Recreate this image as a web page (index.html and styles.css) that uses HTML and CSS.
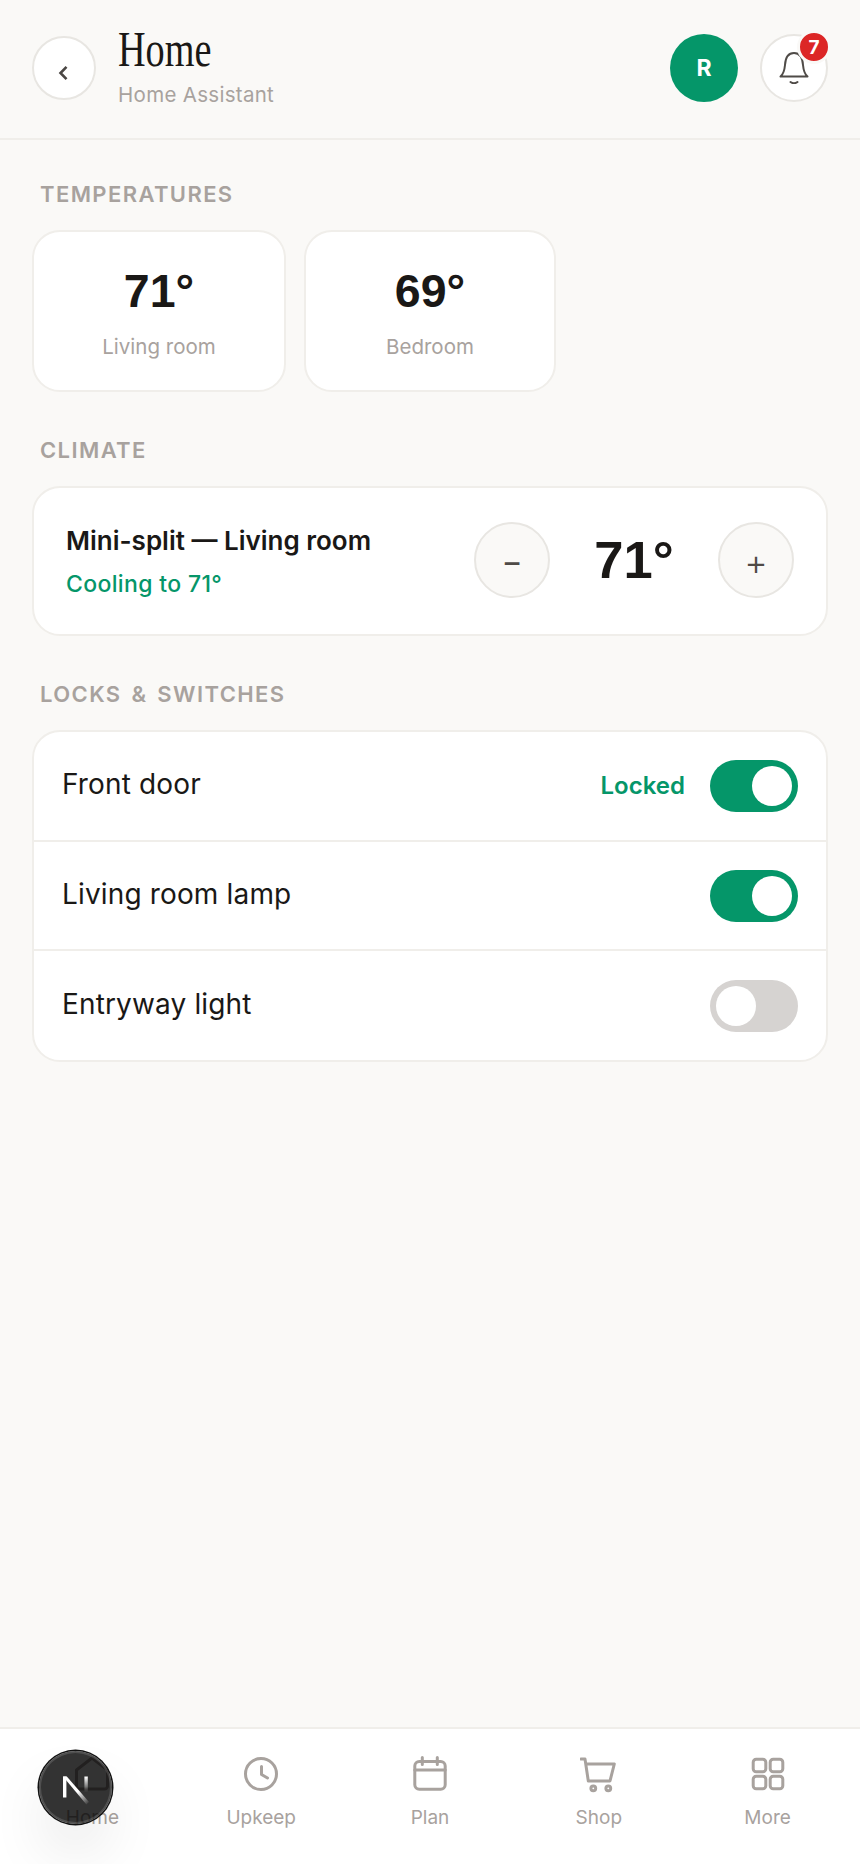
FILE: index.html
```html
<!DOCTYPE html>
<html lang="en">
<head>
<meta charset="utf-8">
<title>Home</title>
<link rel="stylesheet" href="styles.css">
</head>
<body>
<div class="app">
  <header class="top">
    <button class="round back" aria-label="Back">
      <svg width="16" height="16" viewBox="0 0 16 16" fill="none" stroke="#4a4643" stroke-width="2.6"><path d="M10.5 1.800 4.500 8l6 6.200"/></svg>
    </button>
    <div class="titles">
      <h1 class="title"><span>Home</span></h1>
      <div class="sub">Home Assistant</div>
    </div>
    <div class="avatar">R</div>
    <button class="round bell" aria-label="Notifications">
      <svg width="32" height="32" viewBox="0 0 32 32" fill="none" stroke="#4f4b47" stroke-width="2" stroke-linecap="round" stroke-linejoin="round"><path d="M2.500 24.500h27c-3-2.500-4-6-4.500-11.500C24.500 5 21 1 16 1S7.500 5 7 13c-.5 5.500-1.500 9-4.500 11.500Z"/><path d="M12.500 30c2 1.400 5 1.400 7 0"/></svg>
      <span class="badge">7</span>
    </button>
  </header>

  <main class="content">
    <h2 class="label">TEMPERATURES</h2>
    <div class="temps">
      <div class="card temp"><div class="temp-val">71°</div><div class="temp-name">Living room</div></div>
      <div class="card temp"><div class="temp-val">69°</div><div class="temp-name">Bedroom</div></div>
    </div>

    <h2 class="label">CLIMATE</h2>
    <div class="card climate">
      <div class="climate-info">
        <div class="climate-name">Mini-split — Living room</div>
        <div class="climate-state">Cooling to 71°</div>
      </div>
      <button class="step">−</button>
      <div class="setpoint">71°</div>
      <button class="step plus">+</button>
    </div>

    <h2 class="label">LOCKS &amp; SWITCHES</h2>
    <div class="card list">
      <div class="row"><span class="row-name">Front door</span><span class="row-state">Locked</span><span class="toggle on"><i></i></span></div>
      <div class="row"><span class="row-name">Living room lamp</span><span class="toggle on"><i></i></span></div>
      <div class="row"><span class="row-name">Entryway light</span><span class="toggle"><i></i></span></div>
    </div>
  </main>

  <nav class="tabs">
    <div class="tab">
      <svg width="38" height="38" viewBox="0 0 38 38" fill="none" stroke="currentColor" stroke-width="3" stroke-linecap="round" stroke-linejoin="round"><path d="M3.500 15 19 3l15.500 12v16a3 3 0 0 1-3 3h-25a3 3 0 0 1-3-3Z"/></svg>
      <span>Home</span>
    </div>
    <div class="tab">
      <svg width="38" height="38" viewBox="0 0 38 38" fill="none" stroke="currentColor" stroke-width="3" stroke-linecap="round" stroke-linejoin="round"><circle cx="19" cy="19" r="15.500"/><path d="M19.500 11.500V19.500l6 3.500"/></svg>
      <span>Upkeep</span>
    </div>
    <div class="tab">
      <svg width="38" height="38" viewBox="0 0 38 38" fill="none" stroke="currentColor" stroke-width="3" stroke-linecap="round" stroke-linejoin="round"><rect x="3.800" y="6.500" width="30.400" height="27.700" rx="4.500"/><path d="M3.800 15h30.400M11.300 2.500v7M26.300 2.500v7"/></svg>
      <span>Plan</span>
    </div>
    <div class="tab">
      <svg width="38" height="38" viewBox="0 0 38 38" fill="none" stroke="currentColor" stroke-width="3" stroke-linecap="round" stroke-linejoin="round"><path d="M1 4h4l3.300 22h21.700L34.300 9H6"/><circle cx="13.300" cy="33.300" r="2.400"/><circle cx="28.300" cy="33.300" r="2.400"/></svg>
      <span>Shop</span>
    </div>
    <div class="tab">
      <svg width="38" height="38" viewBox="0 0 38 38" fill="none" stroke="currentColor" stroke-width="3" stroke-linejoin="round"><rect x="4.200" y="4.200" width="12.600" height="12.600" rx="3"/><rect x="21.200" y="4.200" width="12.600" height="12.600" rx="3"/><rect x="4.200" y="21.200" width="12.600" height="12.600" rx="3"/><rect x="21.200" y="21.200" width="12.600" height="12.600" rx="3"/></svg>
      <span>More</span>
    </div>
  </nav>

  <div class="devbadge">
    <svg width="34" height="34" viewBox="0 0 34 34" fill="none">
      <defs>
        <linearGradient id="nd" x1="6" y1="5" x2="30" y2="33" gradientUnits="userSpaceOnUse"><stop offset="0.550" stop-color="#fff"/><stop offset="1" stop-color="#fff" stop-opacity="0"/></linearGradient>
        <linearGradient id="ns" x1="27" y1="6" x2="27" y2="21" gradientUnits="userSpaceOnUse"><stop stop-color="#fff"/><stop offset="1" stop-color="#fff" stop-opacity="0"/></linearGradient>
      </defs>
      <path d="M4 5.500h3.400v21H4z" fill="#fff"/>
      <path d="M4 5.500h3.800L30 31l-2.600 2.500L4 5.500Z" fill="url(#nd)"/>
      <path d="M25.400 5.500h3.400V21h-3.400z" fill="url(#ns)"/>
    </svg>
  </div>
</div>
</body>
</html>
```
FILE: styles.css
```css
* { box-sizing: border-box; }
html, body { margin: 0; padding: 0; }
body {
  background: #faf9f7;
  color: #1a1816;
  font-family: "Inter", "Liberation Sans", sans-serif;
}
button { font: inherit; padding: 0; cursor: pointer; }
h1, h2 { margin: 0; font-weight: inherit; }

.app {
  position: relative;
  width: 860px;
  height: 1864px;
  display: flex;
  flex-direction: column;
  overflow: hidden;
}

.top {
  display: flex;
  align-items: center;
  height: 140px;
  padding: 0 32px 2px;
  border-bottom: 2px solid #f0eeea;
}
.round {
  display: flex;
  align-items: center;
  justify-content: center;
  background: #fff;
  border: 2px solid #e8e6e2;
  border-radius: 50%;
  position: relative;
}
.back { width: 64px; height: 64px; }
.back svg { margin-top: 9px; }
.titles { flex: 1; margin-left: 22px; margin-top: -10px; }
.title {
  font-family: "Liberation Serif", serif;
  font-size: 51px;
  line-height: 60px;
  font-weight: 400;
  color: #1a1816;
}
.title span { display: inline-block; transform: scaleX(.75); transform-origin: left center; }
.sub {
  font-size: 20.500px;
  line-height: 26px;
  color: #a8a29e;
  letter-spacing: .3px;
  margin-top: 3px;
}
.avatar {
  width: 68px;
  height: 68px;
  border-radius: 50%;
  background: #059669;
  color: #fff;
  font-weight: 700;
  font-size: 23px;
  display: flex;
  align-items: center;
  justify-content: center;
}
.bell { width: 68px; height: 68px; margin-left: 22px; }
.badge {
  position: absolute;
  top: -6px;
  right: -5px;
  width: 34px;
  height: 34px;
  border-radius: 50%;
  background: #dc2626;
  border: 3px solid #faf9f7;
  color: #fff;
  font-size: 19px;
  font-weight: 700;
  display: flex;
  align-items: center;
  justify-content: center;
}

.content { flex: 1; padding: 42px 32px 0; }
.label {
  font-size: 22px;
  font-weight: 600;
  line-height: 24px;
  letter-spacing: 1.400px;
  word-spacing: 3px;
  color: #a8a29e;
  margin: 0 0 24px 8px;
}
.card {
  background: #fff;
  border: 2px solid #f0eeea;
  border-radius: 28px;
}
.temps {
  display: grid;
  grid-template-columns: 254px 252px;
  gap: 18px;
  margin-bottom: 46px;
}
.temp {
  height: 162px;
  display: flex;
  flex-direction: column;
  align-items: center;
}
.temp-val {
  font-family: "Liberation Sans", sans-serif;
  font-weight: 700;
  font-size: 46.500px;
  line-height: 56px;
  margin-top: 31px;
}
.temp-name {
  font-size: 20.500px;
  line-height: 26px;
  color: #a8a29e;
  margin-top: 15px;
}

.climate {
  display: flex;
  align-items: center;
  height: 150px;
  padding: 0 32px;
  margin-bottom: 46px;
}
.climate-info { flex: 1; }
.climate-name { font-size: 26px; font-weight: 600; line-height: 32px; }
.climate-state { font-size: 23px; font-weight: 500; color: #059669; line-height: 28px; margin-top: 13px; letter-spacing: .35px; }
.step {
  width: 76px;
  height: 76px;
  border-radius: 50%;
  border: 2px solid #e8e6e2;
  background: #faf9f7;
  color: #4f4b47;
  font-size: 32px;
  line-height: 1;
  padding-top: 4px;
  margin-bottom: 2px;
}
.step.plus { font-size: 36px; font-weight: 300; }
.setpoint {
  width: 168px;
  text-align: center;
  font-family: "Liberation Sans", sans-serif;
  font-weight: 700;
  font-size: 52.500px;
  line-height: 64px;
  margin-bottom: 2px;
}

.row {
  display: flex;
  align-items: center;
  height: 109px;
  padding: 0 28px;
  border-bottom: 2px solid #f0eeea;
}
.row:first-child { height: 110px; }
.row:last-child { border-bottom: 0; }
.row-name { flex: 1; font-size: 28px; letter-spacing: .15px; padding-bottom: 3px; }
.row:first-child .row-name { padding-bottom: 5px; }
.row-state { font-size: 24px; font-weight: 600; color: #059669; margin-right: 25px; padding-bottom: 2px; }
.toggle {
  width: 88px;
  height: 52px;
  border-radius: 26px;
  background: #d6d3d1;
  display: flex;
  align-items: center;
  padding: 6px;
}
.toggle i { width: 40px; height: 40px; border-radius: 50%; background: #fff; display: block; }
.toggle.on { background: #059669; justify-content: flex-end; }

.tabs {
  display: grid;
  grid-template-columns: repeat(5, 1fr);
  height: 137px;
  padding: 0 8px;
  background: #fff;
  border-top: 2px solid #f0eeea;
}
.tab {
  display: flex;
  flex-direction: column;
  align-items: center;
  color: #a8a29e;
  padding-top: 26px;
  font-size: 19px;
}
.tab span { margin-top: 12px; line-height: 26px; }

.devbadge {
  position: absolute;
  left: 39px;
  top: 1751px;
  width: 73px;
  height: 73px;
  border-radius: 50%;
  background: rgba(0, 0, 0, .8);
  box-shadow: 0 0 0 1.500px #111, inset 0 0 0 2px rgba(255,255,255,.14), 0 32px 64px -16px rgba(0,0,0,.24);
  display: flex;
  align-items: center;
  justify-content: center;
}
```
